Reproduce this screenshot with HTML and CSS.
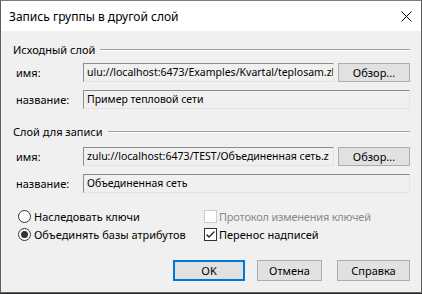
FILE: index.html
```html
<!DOCTYPE html>
<html lang="ru">
<head>
<meta charset="UTF-8" />
<title>Запись группы в другой слой</title>
<link rel="stylesheet" href="styles.css">
</head>
<body>
  <div class="window">
    <!-- Title bar -->
    <div class="titlebar">
      <span class="title">Запись группы в другой слой</span>
      <svg class="close" width="11" height="11" viewBox="0 0 11 11">
        <path d="M0.5 0.5L10.5 10.5M10.5 0.5L0.5 10.5" stroke="#000" stroke-width="1"/>
      </svg>
    </div>

    <div class="content">
      <!-- Source layer -->
      <div class="group-head"><span>Исходный слой</span><div class="rule"></div></div>
      <div class="row row-first">
        <span class="label">имя:</span>
        <div class="field field-short">ulu://localhost:6473/Examples/Kvartal/teplosam.zl</div>
        <div class="button browse">Обзор...</div>
      </div>
      <div class="row">
        <span class="label">название:</span>
        <div class="field">Пример тепловой сети</div>
      </div>

      <!-- Target layer -->
      <div class="group-head group-head-2"><span>Слой для записи</span><div class="rule"></div></div>
      <div class="row row-first-2">
        <span class="label">имя:</span>
        <div class="field field-short">zulu://localhost:6473/TEST/Объединенная сеть.z</div>
        <div class="button browse">Обзор...</div>
      </div>
      <div class="row">
        <span class="label">название:</span>
        <div class="field">Объединенная сеть</div>
      </div>

      <!-- Options -->
      <div class="options">
        <div class="opt-col">
          <div class="opt"><span class="radio"></span>Наследовать ключи</div>
          <div class="opt"><span class="radio checked"></span>Объединять базы атрибутов</div>
        </div>
        <div class="opt-col opt-col-2">
          <div class="opt disabled"><span class="check"></span>Протокол изменения ключей</div>
          <div class="opt">
            <span class="check">
              <svg width="11" height="11" viewBox="0 0 11 11"><path d="M1.5 5.5L4 8L9.5 2.5" fill="none" stroke="#222" stroke-width="1.3"/></svg>
            </span>Перенос надписей
          </div>
        </div>
      </div>

      <!-- Dialog buttons -->
      <div class="actions">
        <div class="button default btn-ok">OK</div>
        <div class="button btn-cancel">Отмена</div>
        <div class="button btn-help">Справка</div>
      </div>
    </div>
  </div>
</body>
</html>
```

FILE: styles.css
```css
body {
  margin: 0;
  height: 294px;
  background: #2e2a3c;
  font-family: "Noto Sans", "Open Sans", sans-serif;
  font-size: 11px;
  color: #000;
}

.window {
  width: 422px;
  height: 293px;
  box-sizing: border-box;
  border: 1px solid #5e5e5e;
  border-top-color: #7a7a7a;
  display: flex;
  flex-direction: column;
  background: #f0f0f0;
}

.titlebar {
  height: 30px;
  background: #fff;
  display: flex;
  align-items: center;
  justify-content: space-between;
  padding: 0 9px 0 8px;
  font-size: 12px;
}
.title {
  margin-top: 1px;
}
.close {
  margin-top: 1px;
}

.content {
  flex: 1;
  padding: 10px 11px 0 11px;
  display: flex;
  flex-direction: column;
}

/* Group heading with etched rule */
.group-head {
  height: 16px;
  display: flex;
  align-items: center;
  gap: 5px;
}
.group-head span {
  padding-left: 1px;
}
.group-head .rule {
  flex: 1;
  height: 1px;
  margin-top: 1px;
  background: #a0a0a0;
  box-shadow: 0 1px 0 #fff;
}
.group-head-2 {
  margin-top: 14px;
}

.row {
  display: flex;
  align-items: center;
  height: 19px;
  margin-top: 8px;
  padding-left: 4px;
}
.row-first {
  margin-top: 6px;
}
.row-first-2 {
  margin-top: 8px;
}

.label {
  width: 67px;
  flex: none;
}

.field {
  flex: 1;
  height: 19px;
  box-sizing: border-box;
  border: 1px solid;
  border-color: #8c8c8c #e3e3e3 #e3e3e3 #8c8c8c;
  background: #f0f0f0;
  padding: 0 0 0 3px;
  font-size: 10.5px;
  line-height: 17px;
  white-space: nowrap;
  overflow: hidden;
}
.field-short {
  flex: none;
  width: 251px;
}

.button {
  box-sizing: border-box;
  border: 1px solid #adadad;
  background: #e1e1e1;
  text-align: center;
  white-space: nowrap;
}
.browse {
  width: 72px;
  height: 19px;
  line-height: 17px;
  margin-left: 4px;
}

/* Radio buttons and checkboxes */
.options {
  display: flex;
  margin-top: 14px;
  padding-left: 6px;
}
.opt-col {
  width: 186px;
}
.opt {
  height: 18px;
  display: flex;
  align-items: center;
}
.radio {
  width: 13px;
  height: 13px;
  box-sizing: border-box;
  border: 1px solid #333;
  border-radius: 50%;
  background: #fff;
  margin-right: 3px;
  display: flex;
  align-items: center;
  justify-content: center;
}
.radio.checked::after {
  content: "";
  width: 7px;
  height: 7px;
  border-radius: 50%;
  background: #333;
}
.check {
  width: 13px;
  height: 13px;
  box-sizing: border-box;
  border: 1px solid #333;
  background: #fff;
  margin-right: 2px;
  display: flex;
  align-items: center;
  justify-content: center;
}
.opt.disabled {
  color: #8a8a8a;
  letter-spacing: -0.2px;
}
.opt.disabled .check {
  border-color: #cccccc;
}

/* OK / Cancel / Help */
.actions {
  display: flex;
  justify-content: flex-end;
  margin-top: 17px;
}
.actions .button {
  height: 21px;
  line-height: 19px;
}
.btn-ok {
  width: 72px;
}
.btn-cancel {
  width: 65px;
  margin-left: 12px;
}
.btn-help {
  width: 73px;
  margin-left: 15px;
}
.button.default {
  border: 2px solid #0078d7;
  line-height: 17px !important;
}
```
